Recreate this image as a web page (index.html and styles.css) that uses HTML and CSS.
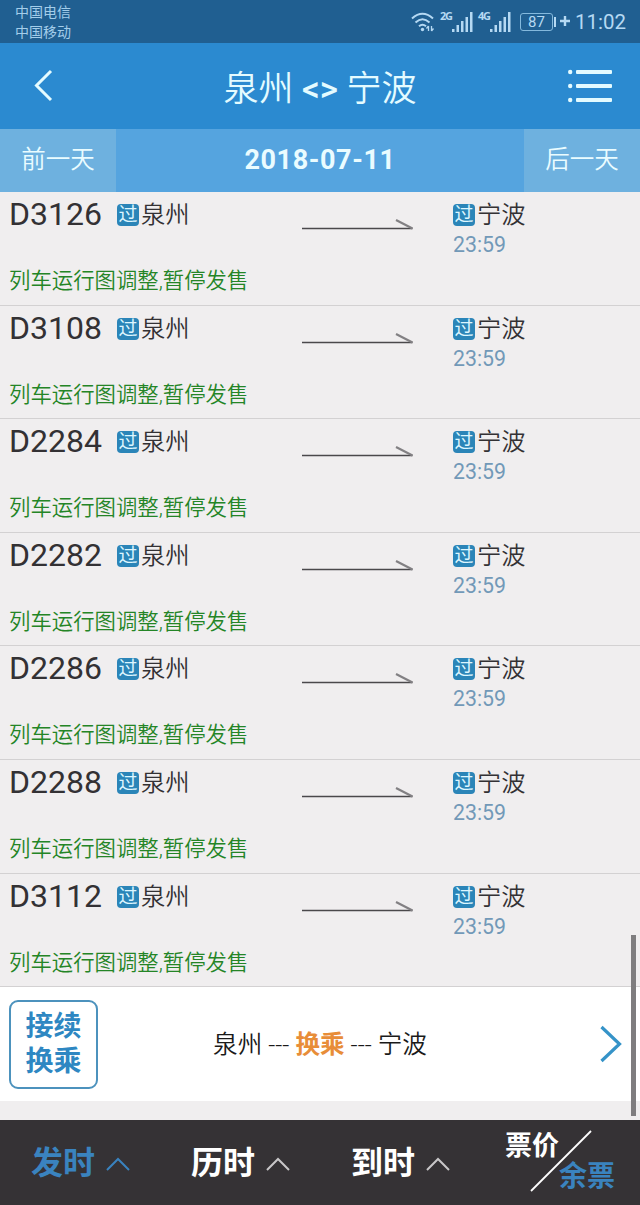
FILE: index.html
```html
<!DOCTYPE html>
<html lang="zh-CN">
<head>
    <meta charset="utf-8">
    <title>泉州 - 宁波</title>
    <meta name="viewport" content="width=device-width, initial-scale=1">
    <link rel="stylesheet" href="styles.css">
</head>
<body>
    <div class="status-bar">
        <div class="carriers">
            <div>中国电信</div>
            <div>中国移动</div>
        </div>
        <div class="status-icons">
            <svg class="wifi" width="24" height="21" viewBox="0 0 24 21" fill="none" stroke="#b5d9f3" stroke-width="2">
                <path d="M1 6.500Q11.500 -3 22 6.500M4.500 10.500Q11.500 4 18.500 10.500M8 14.300Q11.500 11.200 15 14.300"/>
                <circle cx="11.500" cy="17.500" r="1.700" fill="#b5d9f3" stroke="none"/>
                <path d="M17.500 14v5M15.500 16.500l2-2.500M20.500 14v5M22.500 16.500l-2 2.500" stroke-width="1.300"/>
            </svg>
            <span class="net">2G</span>
            <svg class="signal" width="21" height="20" viewBox="0 0 21 20" fill="#b5d9f3">
                <path d="M0 17h2.500v3H0zM4.500 13h2.500v7h-2.500zM9 9h2.500v11H9zM13.500 5h2.500v15h-2.500zM18 0h2.500v20H18z"/>
            </svg>
            <span class="net net-4g">4G</span>
            <svg class="signal" width="21" height="20" viewBox="0 0 21 20" fill="#b5d9f3">
                <path d="M0 17h2.500v3H0zM4.500 13h2.500v7h-2.500zM9 9h2.500v11H9zM13.500 5h2.500v15h-2.500zM18 0h2.500v20H18z"/>
            </svg>
            <span class="battery">87</span>
            <span class="battery-tip"></span>
            <svg class="plus" width="10" height="10" viewBox="0 0 10 10" stroke="#b5d9f3" stroke-width="2.400"><path d="M0 5h10M5 0v10"/></svg>
            <span class="clock">11:02</span>
        </div>
    </div>

    <div class="header">
        <svg class="back" width="20" height="34" viewBox="0 0 20 34" fill="none" stroke="#e4fbff" stroke-width="3"><path d="M17 2L2.500 16.500L17 31"/></svg>
        <h1>泉州 <span class="swap">&lt;&gt;</span> 宁波</h1>
        <svg class="menu" width="44" height="34" viewBox="0 0 44 34" fill="#e4fbff">
            <path d="M9 1h34a1 1 0 0 1 1 1v2a1 1 0 0 1-1 1H9a1 1 0 0 1-1-1V2a1 1 0 0 1 1-1zM9 15h34a1 1 0 0 1 1 1v2a1 1 0 0 1-1 1H9a1 1 0 0 1-1-1v-2a1 1 0 0 1 1-1zM9 29h34a1 1 0 0 1 1 1v2a1 1 0 0 1-1 1H9a1 1 0 0 1-1-1v-2a1 1 0 0 1 1-1z"/>
            <circle cx="2.200" cy="3" r="2.200"/><circle cx="2.200" cy="17" r="2.200"/><circle cx="2.200" cy="31" r="2.200"/>
        </svg>
    </div>

    <div class="date-bar">
        <div class="day">前一天</div>
        <div class="date">2018-07-11</div>
        <div class="day">后一天</div>
    </div>

    <svg width="0" height="0" class="defs">
        <symbol id="arrow" viewBox="0 0 112 14">
            <path d="M0 11.500H110.500" stroke="#4a484b" stroke-width="1.600"/>
            <path d="M94 3L110.500 11.500" stroke="#828083" stroke-width="2.200"/>
        </symbol>
    </svg>

    <div class="content">
        <div class="train">
            <div class="number">D3126</div>
            <div class="station"><span class="pass">过</span><span>泉州</span></div>
            <svg class="arrow"><use href="#arrow"/></svg>
            <div class="arrival"><div class="station"><span class="pass">过</span><span>宁波</span></div><div class="time">23:59</div></div>
            <div class="notice">列车运行图调整,暂停发售</div>
        </div>
        <div class="train">
            <div class="number">D3108</div>
            <div class="station"><span class="pass">过</span><span>泉州</span></div>
            <svg class="arrow"><use href="#arrow"/></svg>
            <div class="arrival"><div class="station"><span class="pass">过</span><span>宁波</span></div><div class="time">23:59</div></div>
            <div class="notice">列车运行图调整,暂停发售</div>
        </div>
        <div class="train">
            <div class="number">D2284</div>
            <div class="station"><span class="pass">过</span><span>泉州</span></div>
            <svg class="arrow"><use href="#arrow"/></svg>
            <div class="arrival"><div class="station"><span class="pass">过</span><span>宁波</span></div><div class="time">23:59</div></div>
            <div class="notice">列车运行图调整,暂停发售</div>
        </div>
        <div class="train">
            <div class="number">D2282</div>
            <div class="station"><span class="pass">过</span><span>泉州</span></div>
            <svg class="arrow"><use href="#arrow"/></svg>
            <div class="arrival"><div class="station"><span class="pass">过</span><span>宁波</span></div><div class="time">23:59</div></div>
            <div class="notice">列车运行图调整,暂停发售</div>
        </div>
        <div class="train">
            <div class="number">D2286</div>
            <div class="station"><span class="pass">过</span><span>泉州</span></div>
            <svg class="arrow"><use href="#arrow"/></svg>
            <div class="arrival"><div class="station"><span class="pass">过</span><span>宁波</span></div><div class="time">23:59</div></div>
            <div class="notice">列车运行图调整,暂停发售</div>
        </div>
        <div class="train">
            <div class="number">D2288</div>
            <div class="station"><span class="pass">过</span><span>泉州</span></div>
            <svg class="arrow"><use href="#arrow"/></svg>
            <div class="arrival"><div class="station"><span class="pass">过</span><span>宁波</span></div><div class="time">23:59</div></div>
            <div class="notice">列车运行图调整,暂停发售</div>
        </div>
        <div class="train">
            <div class="number">D3112</div>
            <div class="station"><span class="pass">过</span><span>泉州</span></div>
            <svg class="arrow"><use href="#arrow"/></svg>
            <div class="arrival"><div class="station"><span class="pass">过</span><span>宁波</span></div><div class="time">23:59</div></div>
            <div class="notice">列车运行图调整,暂停发售</div>
        </div>

        <div class="transfer">
            <div class="transfer-badge">接续<br>换乘</div>
            <div class="transfer-route">泉州 --- <b>换乘</b> --- 宁波</div>
            <svg width="22" height="38" viewBox="0 0 22 38" fill="none" stroke="#3593c8" stroke-width="3.200"><path d="M1.500 2L19.500 19L1.500 36"/></svg>
        </div>
        <div class="scrollbar"></div>
    </div>

    <div class="tabs">
        <div class="tab active">发时<svg width="24" height="14" viewBox="0 0 24 14"><path d="M1 13L12 2L23 13"/></svg></div>
        <div class="tab">历时<svg width="24" height="14" viewBox="0 0 24 14"><path d="M1 13L12 2L23 13"/></svg></div>
        <div class="tab">到时<svg width="24" height="14" viewBox="0 0 24 14"><path d="M1 13L12 2L23 13"/></svg></div>
        <div class="toggle">
            <span class="price">票价</span>
            <svg width="62" height="62" viewBox="0 0 62 62"><path d="M1 61L61 1" stroke="#fff" stroke-width="1.800"/></svg>
            <span class="remain">余票</span>
        </div>
    </div>
</body>
</html>
```

FILE: styles.css
```css
* {
    box-sizing: border-box;
}
body {
    margin: 0;
    width: 640px;
    height: 1205px;
    overflow: hidden;
    display: flex;
    flex-direction: column;
    background-color: #f0eeef;
    font-family: Roboto, "Noto Sans CJK SC", sans-serif;
    color: #333134;
}
svg {
    display: block;
    flex: none;
}
.defs {
    position: absolute;
}
.status-bar {
    height: 43px;
    display: flex;
    justify-content: space-between;
    padding: 2px 14px 0 15px;
    background-color: #205f91;
    color: #b5d9f3;
}
.carriers {
    font-size: 14px;
    line-height: 20px;
    color: #a3cdea;
}
.status-icons {
    display: flex;
    height: 38px;
    align-items: center;
}
.wifi {
    margin-top: 2px;
}
.net {
    width: 12px;
    margin: -10px 0 0 5px;
    font: bold 11px/12px "Open Sans", sans-serif;
    letter-spacing: -1.3px;
}
.net-4g {
    margin-left: 5px;
}
.signal {
    margin-top: 1px;
}
.battery {
    width: 33px;
    height: 18px;
    margin: 2px 0 0 9px;
    border: 1px solid #84b9dd;
    border-radius: 3px;
    font-size: 15px;
    line-height: 17px;
    text-align: center;
}
.battery-tip {
    width: 2px;
    height: 10px;
    margin: 2px 4px 0 1px;
    background-color: #b5d9f3;
}
.clock {
    margin-left: 5px;
    font-size: 20.5px;
    line-height: 38px;
    padding-top: 2px;
}
.header {
    height: 86px;
    display: flex;
    align-items: center;
    justify-content: space-between;
    padding: 0 28px 0 34px;
    background-color: #2b8ad0;
    color: #e4fbff;
}
.back {
    margin-right: 18px;
}
.header h1 {
    margin: -2px 0 0;
    font-size: 35px;
    font-weight: 350;
}
.swap {
    font-weight: 500;
}
.date-bar {
    height: 63px;
    display: flex;
    background-color: #55a4df;
    color: #eafcff;
    line-height: 62px;
    text-align: center;
}
.day {
    width: 116px;
    background-color: #6eb1df;
    font-size: 24.5px;
    font-weight: 350;
}
.date {
    flex: 1;
    font-size: 27px;
    font-weight: bold;
    letter-spacing: 0.6px;
}
.content {
    position: relative;
    height: 928px;
}
.train {
    height: 113.6px;
    display: grid;
    grid-template-columns: 108px 185px 151px 1fr;
    grid-template-rows: 70px 1fr;
    padding-left: 9px;
    border-bottom: 1px solid #d3d1d2;
}
.number {
    font-size: 32px;
    line-height: 45px;
}
.station {
    display: flex;
    align-items: center;
    height: 41px;
    font-size: 24.3px;
    font-weight: 350;
}
.pass {
    width: 22px;
    height: 22px;
    margin: 5px 2px 0 0;
    border-radius: 4px;
    background-color: #2b85b8;
    color: #ddf6ff;
    font-size: 19px;
    font-weight: 400;
    line-height: 21px;
    text-align: center;
}
.arrow {
    width: 112px;
    height: 14px;
    margin-top: 25px;
}
.time {
    margin-top: -1px;
    color: #7299b8;
    font-size: 21.3px;
    line-height: 26px;
}
.notice {
    grid-column: 1 / -1;
    color: #248526;
    font-size: 21.4px;
    font-weight: 350;
    line-height: 38px;
}
.transfer {
    height: 114px;
    display: flex;
    align-items: center;
    justify-content: space-between;
    padding: 0 18px 0 9px;
    background-color: #fff;
    color: #1a1a1a;
}
.transfer-badge {
    width: 89px;
    height: 89px;
    padding-top: 7px;
    border: 2px solid #4c92bd;
    border-radius: 9px;
    color: #2e87c2;
    font-size: 28px;
    font-weight: bold;
    line-height: 35px;
    text-align: center;
}
.transfer-route {
    margin: -5px 58px 0 0;
    font-size: 24.6px;
    font-weight: 350;
}
.transfer-route b {
    color: #e88d38;
    font-weight: bold;
}
.scrollbar {
    position: absolute;
    top: 743px;
    right: 4px;
    width: 5px;
    height: 181px;
    background-color: #7f7d7f;
}
.tabs {
    height: 85px;
    display: flex;
    background-color: #353235;
    color: #fff;
    font-size: 32px;
    font-weight: bold;
}
.tab {
    width: 160px;
    display: flex;
    align-items: center;
    padding: 0 0 5px 31px;
}
.tab svg {
    margin: 7px 0 0 11px;
    fill: none;
    stroke: #c9c7c9;
    stroke-width: 2;
}
.active {
    color: #3a83bf;
}
.active svg {
    stroke: #3a83bf;
}
.toggle {
    display: flex;
    padding: 10px 0 0 25px;
    font-size: 27px;
    line-height: 33px;
}
.toggle svg {
    margin-left: -29px;
}
.remain {
    margin: 30px 0 0 -33px;
    color: #3a83bf;
    font-size: 28px;
}
```
